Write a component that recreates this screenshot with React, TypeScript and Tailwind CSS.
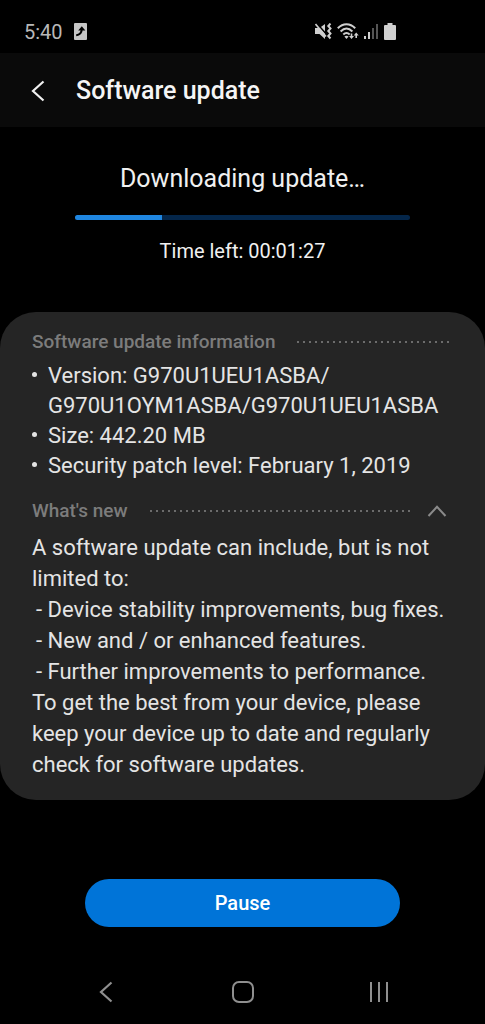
import React from 'react';

const updateInfo = [
  'Version: G970U1UEU1ASBA/ G970U1OYM1ASBA/G970U1UEU1ASBA',
  'Size: 442.20 MB',
  'Security patch level: February 1, 2019',
];

const changes = [
  'Device stability improvements, bug fixes.',
  'New and / or enhanced features.',
  'Further improvements to performance.',
];

const DottedLine = () => (
  <span className="h-[2px] flex-1 bg-[radial-gradient(circle_at_1px_1px,#6c6c6c_1px,transparent_1px)] bg-[length:6px_2px]" />
);

const StatusBar = () => (
  <div className="flex h-[53px] items-center justify-between pt-[10px] pr-[89px] pl-6 text-[#b8b8b8]">
    <div className="flex items-center gap-[11px]">
      <span className="text-[20px] leading-6">5:40</span>
      <svg width="13" height="17" viewBox="0 0 13 17" aria-hidden="true">
        <rect width="13" height="17" rx="1" fill="#c6c6c6" />
        <path d="M2.2 12.2C6 12 7.6 10 7.8 6" fill="none" stroke="#000" strokeWidth="2" />
        <path d="M4.2 7.4 7.8 3.2 11.4 7.4Z" fill="#000" />
      </svg>
    </div>
    <div className="flex items-center gap-[5px]">
      {/* muted, vibrate */}
      <svg width="17" height="17" viewBox="0 0 17 17" aria-hidden="true">
        <path d="M0 5h4.500L10 1v15l-5.500-5H0Z" fill="#cfcfcf" />
        <path d="M1.5 0 12 12" stroke="#000" strokeWidth="1.6" />
        <path d="M0.5 1 11 13.500" stroke="#cfcfcf" strokeWidth="1.6" />
        <path d="m15.5 0.5-2.200 2.500 2.200 2.500-2.200 2.500 2.200 2.500-2.200 2.500 2.200 2.500" fill="none" stroke="#cfcfcf" strokeWidth="2" />
      </svg>
      {/* wifi with traffic arrows */}
      <svg width="22" height="17" viewBox="0 0 22 17" aria-hidden="true">
        <g fill="none" stroke="#cfcfcf" strokeWidth="2">
          <path d="M0.8 5.2C6-0.2 13-0.2 18.2 5.2" />
          <path d="M3.6 8.5C7.5 4.6 11.5 4.6 15.4 8.5" />
          <path d="M6.3 11.5C8.5 9.4 10.5 9.4 12.7 11.5" />
        </g>
        <path d="M7.4 13.6Q9.5 11.9 11.600 13.600L9.500 16Z" fill="#cfcfcf" />
        <g fill="#cfcfcf">
          <path d="M13.700 10.500h1.600v2.500h1.700l-2.500 3-2.500-3h1.700Z" />
          <path d="M18.400 15v-2.500h-1.700l2.500-3 2.500 3H20V15Z" />
        </g>
      </svg>
      <svg width="15" height="17" viewBox="0 0 15 17" aria-hidden="true">
        <g fill="#cfcfcf">
          <path d="M0 13h2v3H0Z" />
          <path d="M4 9h2v7H4Z" />
        </g>
        <g fill="#555">
          <path d="M8 5h2v11H8Z" />
          <path d="M12 1h2v15h-2Z" />
        </g>
      </svg>
      <svg width="12" height="17" viewBox="0 0 12 17" aria-hidden="true">
        <path d="M3.5 0h5v2H11a1 1 0 0 1 1 1v13a1 1 0 0 1-1 1H1a1 1 0 0 1-1-1V3a1 1 0 0 1 1-1h2.5Z" fill="#cfcfcf" />
      </svg>
    </div>
  </div>
);

const Progress = ({ value }: { value: number }) => (
  <div
    role="progressbar"
    aria-label="Download progress"
    aria-valuenow={value}
    aria-valuemin={0}
    aria-valuemax={100}
    className="h-[5px] overflow-hidden rounded-full bg-[#04264a]"
  >
    <div className="h-full bg-[#1f86e0]" style={{ width: `${value}%` }} />
  </div>
);

const NavBar = () => (
  <nav className="flex h-16 items-center justify-between px-[94px] text-[#8f8f8f]">
    <button aria-label="Back" className="flex w-6 justify-center">
      <svg width="14" height="22" viewBox="0 0 14 22" fill="none" stroke="currentColor" strokeWidth="2.2">
        <path d="M12.5 1.5 2 11l10.5 9.5" />
      </svg>
    </button>
    <button aria-label="Home" className="flex w-6 justify-center">
      <svg width="22" height="22" viewBox="0 0 22 22" fill="none" stroke="currentColor" strokeWidth="2">
        <rect x="1" y="1" width="20" height="20" rx="6" />
      </svg>
    </button>
    <button aria-label="Recents" className="flex w-6 justify-center">
      <svg width="20" height="22" viewBox="0 0 20 22" stroke="currentColor" strokeWidth="2">
        <path d="M2 1v20M10 1v20M18 1v20" />
      </svg>
    </button>
  </nav>
);

const App: React.FC = () => {
  return (
    <div className="flex min-h-screen flex-col bg-black font-[Roboto,sans-serif] text-[#e4e4e4]">
      <StatusBar />

      <header className="flex h-[74px] items-center gap-7 bg-[#0a0a0a] pt-[2px] pl-7">
        <button aria-label="Navigate up" className="flex w-5 justify-center">
          <svg width="14" height="22" viewBox="0 0 14 22" fill="none" stroke="#f0f0f0" strokeWidth="2.2">
            <path d="M12.5 1.5 2 11l10.5 9.5" />
          </svg>
        </button>
        <h1 className="text-[25px] leading-8 font-medium text-[#f5f5f5]">Software update</h1>
      </header>

      <main className="flex flex-1 flex-col">
        <section className="px-[75px] pt-9 text-center text-[#f0f0f0]">
          <h2 className="mb-5 text-[25px] leading-8">Downloading update…</h2>
          <Progress value={26} />
          <p className="mt-4 text-[20px] leading-[30px]">Time left: 00:01:27</p>
        </section>

        <section className="mt-[46px] rounded-[36px] bg-[#252525] px-8 pt-[14px] pb-5 text-[22px]">
          <div className="flex items-center gap-[22px]">
            <h3 className="text-[19px] leading-[32px] font-medium text-[#7c7c7c]">Software update information</h3>
            <DottedLine />
          </div>
          <ul className="mt-[3px] leading-[30px]">
            {updateInfo.map((item) => (
              <li key={item} className="flex">
                <span className="w-4 shrink-0 pt-[11px]">
                  <span className="block size-[5px] rounded-full bg-[#e4e4e4]" />
                </span>
                <span>{item}</span>
              </li>
            ))}
          </ul>

          <div className="mt-[14px] flex items-center gap-[22px]">
            <h3 className="text-[19px] leading-[32px] font-medium text-[#7c7c7c]">What's new</h3>
            <DottedLine />
            <button aria-label="Collapse" aria-expanded="true" className="-ml-2 pr-[6px]">
              <svg width="20" height="12" viewBox="0 0 20 12" fill="none" stroke="#8a8a8a" strokeWidth="2">
                <path d="M1.5 11 10 1.8 18.5 11" />
              </svg>
            </button>
          </div>
          <div className="mt-[5px] leading-[31px]">
            <p>A software update can include, but is not limited to:</p>
            <ul className="pl-1">
              {changes.map((change) => (
                <li key={change}>- {change}</li>
              ))}
            </ul>
            <p>To get the best from your device, please keep your device up to date and regularly check for software updates.</p>
          </div>
        </section>

        <div className="mt-auto px-[85px] pb-[33px]">
          <button className="h-12 w-full rounded-full bg-[#0074d8] text-[20px] font-medium text-white">Pause</button>
        </div>
      </main>

      <NavBar />
    </div>
  );
};

export default App;
